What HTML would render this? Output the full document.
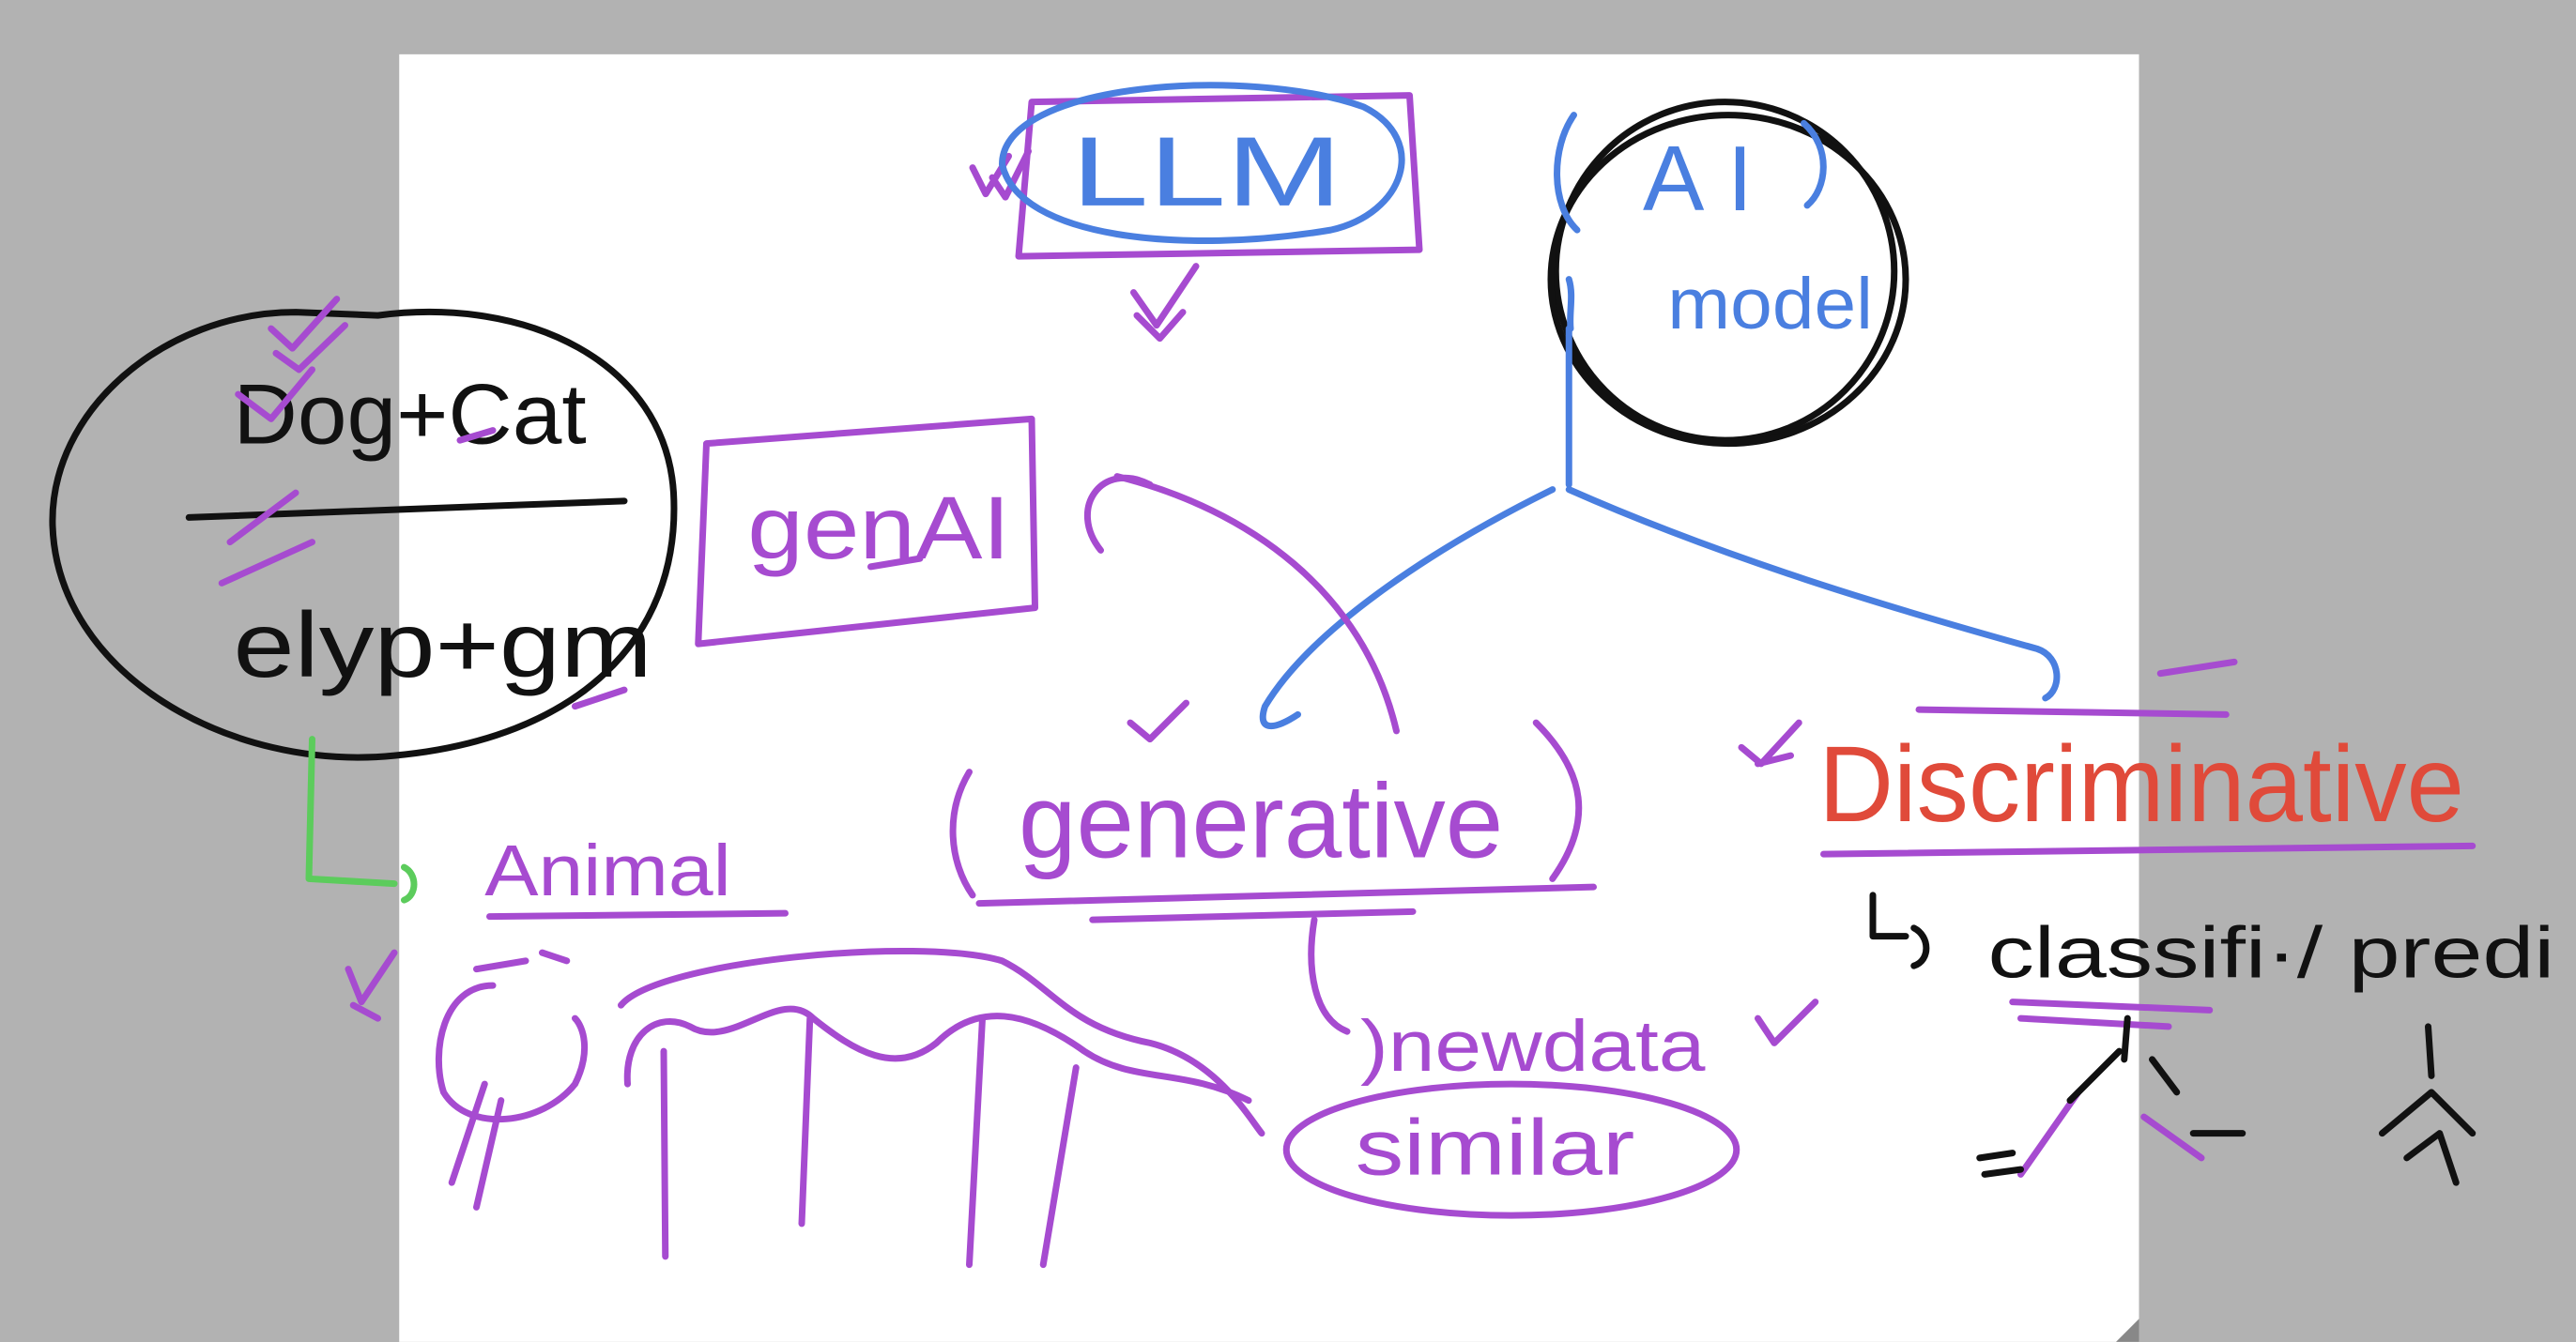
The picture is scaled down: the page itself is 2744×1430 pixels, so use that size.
<!DOCTYPE html>
<html><head><meta charset="utf-8"><style>
html,body{margin:0;padding:0;background:#b2b2b2;}
svg{display:block}
text{font-family:"Liberation Sans",sans-serif;}
</style></head><body>
<svg width="2744" height="1430" viewBox="0 0 1568 817" xmlns="http://www.w3.org/2000/svg">
<rect width="1568" height="817" fill="#b2b2b2"/>
<rect x="243" y="33" width="1059" height="784" fill="#fff"/>
<path d="M1288 817 L1302 803 L1302 817Z" fill="#888"/>
<g fill="none" stroke-linecap="round" stroke-linejoin="round">
<g stroke="#a64bd0" stroke-width="4">
<path d="M628 62 L858 58 L864 152 L620 156 Z"/>
<path d="M592 102 L600 118 L614 95 M604 108 L612 120 L626 92"/>
<path d="M690 178 L704 198 L728 162 M692 192 L706 206 L720 190"/>
</g>
<path d="M610 100 C 610 50 760 40 830 65 C 870 85 855 130 810 140 C 720 155 620 145 610 100Z" stroke="#4a7fe0" stroke-width="4"/>
<text x="652" y="125" font-size="60" fill="#4a7fe0" textLength="165" lengthAdjust="spacingAndGlyphs">LLM</text>
<ellipse cx="1050" cy="165" rx="103" ry="103" stroke="#111" stroke-width="4"/>
<ellipse cx="1052" cy="170" rx="108" ry="100" stroke="#111" stroke-width="4"/>
<path d="M958 70 C944 90 944 125 960 140 M1098 75 C1115 90 1112 115 1100 125 M955 170 C958 180 955 190 956 200" stroke="#4a7fe0" stroke-width="4"/>
<text x="1000" y="128" font-size="56" fill="#4a7fe0" letter-spacing="14">AI</text>
<text x="1015" y="200" font-size="44" fill="#4a7fe0" textLength="125" lengthAdjust="spacingAndGlyphs">model</text>
<g stroke="#4a7fe0" stroke-width="4">
<path d="M955 200 L955 295 M945 298 C880 330 800 380 770 430 C765 445 775 445 790 435 M955 298 C1050 340 1150 370 1240 395 C1255 400 1255 420 1245 425"/>
</g>
<path d="M180 190 C100 190 30 250 32 320 C35 410 140 470 240 460 C350 450 415 390 410 300 C405 220 320 180 230 192 Z" stroke="#111" stroke-width="4"/>
<path d="M115 315 L380 305" stroke="#111" stroke-width="4"/>
<text x="142" y="270" font-size="52" fill="#111" textLength="215" lengthAdjust="spacingAndGlyphs">Dog+Cat</text>
<text x="142" y="412" font-size="56" fill="#111" textLength="255" lengthAdjust="spacingAndGlyphs">elyp+gm</text>
<g stroke="#a64bd0" stroke-width="4">
<path d="M165 200 L178 212 L205 182 M168 215 L182 225 L210 198 M145 240 L165 255 L190 225 M140 330 L180 300 M135 355 L190 330 M350 430 L380 420 M280 268 L300 262"/>
</g>
<path d="M430 270 L628 255 L630 370 L425 392 Z" stroke="#a64bd0" stroke-width="4"/>
<text x="455" y="340" font-size="54" fill="#a64bd0" textLength="160" lengthAdjust="spacingAndGlyphs">genAI</text>
<path d="M530 345 L560 340" stroke="#a64bd0" stroke-width="4"/>
<path d="M700 295 C670 280 650 310 670 335 M680 290 C760 310 830 360 850 445" stroke="#a64bd0" stroke-width="4"/>
<g stroke="#a64bd0" stroke-width="4">
<path d="M590 470 C575 495 578 525 592 545 M935 440 C965 470 970 500 945 535"/>
<path d="M596 550 L970 540 M665 560 L860 555"/>
<path d="M688 440 L700 450 L722 428"/>
<path d="M800 560 C795 590 800 620 820 628 M1070 620 L1080 635 L1105 610"/>
<ellipse cx="920" cy="700" rx="137" ry="40"/>
</g>
<text x="620" y="522" font-size="64" fill="#a64bd0" textLength="295" lengthAdjust="spacingAndGlyphs">generative</text>
<text x="828" y="652" font-size="44" fill="#a64bd0" textLength="210" lengthAdjust="spacingAndGlyphs">)newdata</text>
<text x="825" y="715" font-size="48" fill="#a64bd0" textLength="170" lengthAdjust="spacingAndGlyphs">similar</text>
<path d="M190 450 L188 535 L240 538 M246 528 C254 532 254 545 246 548" stroke="#5ccc5c" stroke-width="4"/>
<text x="295" y="545" font-size="44" fill="#a64bd0" textLength="150" lengthAdjust="spacingAndGlyphs">Animal</text>
<g stroke="#a64bd0" stroke-width="4">
<path d="M298 558 L478 556 M212 590 L220 610 L240 580 M215 612 L230 620"/>
<path d="M300 600 C270 600 262 640 270 665 C285 690 330 685 350 660 C360 640 355 625 350 620 M290 590 L320 585 M330 580 L345 585"/>
<path d="M295 660 L275 720 M305 670 L290 735"/>
<path d="M378 612 C400 585 560 570 610 585 C640 600 650 625 700 635 C740 645 760 680 768 690"/>
<path d="M382 660 C380 630 400 615 420 625 C445 640 475 600 495 620 C520 640 545 655 570 635 C595 610 625 615 660 640 C690 660 720 650 760 670"/>
<path d="M404 640 L405 765 M493 620 L488 745 M598 620 L590 770 M655 650 L635 770"/>
</g>
<g stroke="#a64bd0" stroke-width="4">
<path d="M1168 432 L1355 435 M1315 410 L1360 403 M1060 455 L1072 465 L1095 440 M1070 465 L1090 460"/>
<path d="M1110 520 L1505 515"/>
<path d="M1225 610 L1345 615 M1230 620 L1320 625"/>
<path d="M1230 715 L1265 665 M1305 680 L1340 705"/>
</g>
<text x="1107" y="500" font-size="66" fill="#e04a3a" textLength="393" lengthAdjust="spacingAndGlyphs">Discriminative</text>
<path d="M1140 545 L1140 570 L1160 570 M1165 565 C1175 570 1175 585 1165 588" stroke="#111" stroke-width="4"/>
<text x="1210" y="595" font-size="44" fill="#111" textLength="345" lengthAdjust="spacingAndGlyphs">classifi·/ predi</text>
<g stroke="#111" stroke-width="4">
<path d="M1295 620 L1293 645 M1260 670 L1290 640 M1310 645 L1325 665 M1335 690 L1365 690 M1205 705 L1225 702 M1208 715 L1230 712 M1478 625 L1480 655 M1450 690 L1480 665 L1505 690 M1465 705 L1485 690 L1495 720"/>
</g>
</g>
</svg>
</body></html>
